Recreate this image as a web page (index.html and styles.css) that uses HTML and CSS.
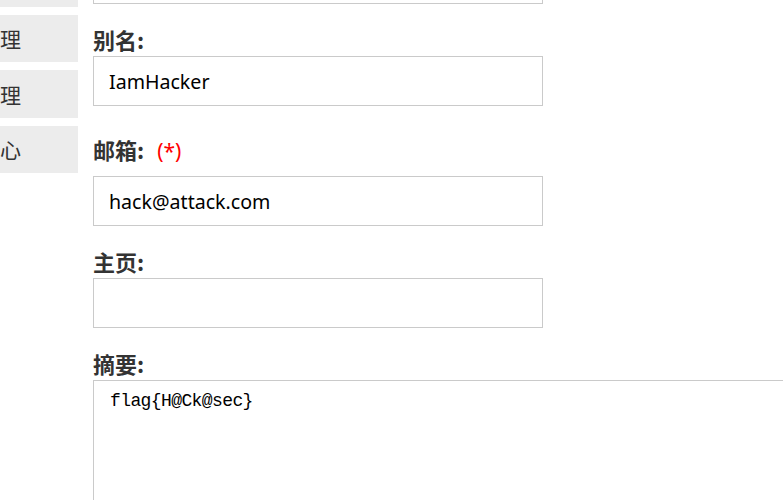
FILE: index.html
```html
<!DOCTYPE html>
<html lang="zh-CN">
<head>
<meta charset="utf-8">
<title>个人资料</title>
<link rel="stylesheet" href="styles.css">
</head>
<body>
<div class="page">
  <nav class="sidebar">
    <div class="side-item">文章管理</div>
    <div class="side-item">用户管理</div>
    <div class="side-item">评论管理</div>
    <div class="side-item">个人中心</div>
  </nav>
  <form class="profile">
    <input class="field-input" type="text" value="hacker">
    <label class="field-label">别名:</label>
    <input class="field-input" type="text" value="IamHacker">
    <label class="field-label field-label--required">邮箱:<span class="required">(*)</span></label>
    <input class="field-input" type="text" value="hack@attack.com">
    <label class="field-label">主页:</label>
    <input class="field-input" type="text" value="">
    <label class="field-label">摘要:</label>
    <textarea class="field-textarea">flag{H@Ck@sec}</textarea>
  </form>
</div>
</body>
</html>
```

FILE: styles.css
```css
html, body {
  margin: 0;
  padding: 0;
  background: #fff;
  overflow: hidden;
}

.page {
  display: flex;
  align-items: flex-start;
  gap: 15px;
  width: 1000px;
}

.sidebar {
  width: 78px;
  flex: none;
  display: flex;
  flex-direction: column;
  gap: 8px;
  margin-top: -40.8px;
}

.side-item {
  height: 47.5px;
  background: #ececec;
  display: flex;
  align-items: center;
  justify-content: flex-end;
  padding-right: 57px;
  overflow: hidden;
  white-space: nowrap;
  font-family: "Noto Sans CJK SC", sans-serif;
  font-size: 21px;
  color: #333;
}

.profile {
  display: flex;
  flex-direction: column;
  align-items: flex-start;
  margin-top: -46px;
  flex: 1;
}

.field-label {
  display: block;
  height: 28px;
  line-height: 22px;
  font-family: "Noto Sans CJK SC", sans-serif;
  font-size: 22px;
  font-weight: bold;
  color: #333;
}

.field-label--required {
  height: 46px;
  padding-top: 8px;
  box-sizing: border-box;
}

.required {
  margin-left: 13px;
  color: #f00;
  font-weight: normal;
  font-size: 21px;
  font-family: "Noto Sans", sans-serif;
}

.field-input {
  box-sizing: border-box;
  width: 450px;
  height: 50px;
  margin: 0 0 24px 0;
  padding: 0 15px;
  border: 1px solid #cacaca;
  border-radius: 0;
  outline: none;
  font-family: "Noto Sans", "Noto Sans CJK SC", sans-serif;
  font-size: 19.6px;
  color: #000;
  background: #fff;
}

.field-textarea {
  box-sizing: border-box;
  width: 900px;
  height: 200px;
  margin: 0;
  padding: 9px 16px;
  border: 1px solid #cacaca;
  border-radius: 0;
  outline: none;
  resize: none;
  font-family: "Liberation Mono", monospace;
  font-size: 18px;
  letter-spacing: -0.6px;
  line-height: 22px;
  color: #000;
  background: #fff;
}
```
